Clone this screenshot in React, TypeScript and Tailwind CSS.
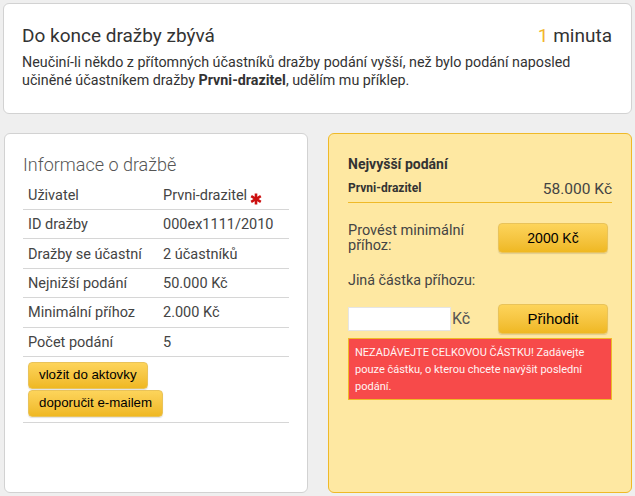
import React from "react";

const btn =
  "rounded-[4px] border border-[#e9c35a] bg-gradient-to-b from-[#fdd45a] to-[#efb821] text-black font-['Liberation_Sans',Arial,sans-serif] shadow-[0_1px_1px_rgba(0,0,0,0.12)]";

function Asterisk() {
  return (
    <svg width="12" height="12" viewBox="0 0 12 12" className="ml-[3px] translate-y-[3px]">
      <g stroke="#cc1111" strokeWidth="2.6" strokeLinecap="butt">
        <line x1="6" y1="0.5" x2="6" y2="11.5" />
        <line x1="1.2" y1="3.2" x2="10.8" y2="8.8" />
        <line x1="1.2" y1="8.8" x2="10.8" y2="3.2" />
      </g>
    </svg>
  );
}

export default function App() {
  const rows: [string, React.ReactNode][] = [
    ["Uživatel", <span className="flex items-center">Prvni-drazitel<Asterisk /></span>],
    ["ID dražby", "000ex1111/2010"],
    ["Dražby se účastní", "2 účastníků"],
    ["Nejnižší podání", "50.000 Kč"],
    ["Minimální příhoz", "2.000 Kč"],
    ["Počet podání", "5"],
  ];
  return (
    <div className="min-h-[496px] w-[635px] bg-[#efefef] pt-[3px] px-[3px] font-['Roboto',sans-serif]">
      <div className="h-[111px] rounded-[6px] border border-[#d2d2d2] bg-white pl-[18px] pr-[19px] pt-[20px]">
        <div className="flex justify-between text-[19px] leading-[24px] text-[#333]">
          <span>Do konce dražby zbývá</span>
          <span>
            <span className="text-[#f2b62c]">1</span> minuta
          </span>
        </div>
        <p className="mt-[5px] text-[14.3px] leading-[18px] text-[#333]">
          Neučiní-li někdo z přítomných účastníků dražby podání vyšší, než bylo podání naposled
          <br />
          učiněné účastníkem dražby <b>Prvni-drazitel</b>, udělím mu příklep.
        </p>
      </div>

      <div className="mt-[19px] flex gap-[20px] pl-[1px]">
        <div className="h-[360px] w-[304px] rounded-[6px] border border-[#d2d2d2] bg-white px-[18px] pt-[17px]">
          <h2 className="text-[18px] font-light leading-[28px] text-[#555]">Informace o dražbě</h2>
          <div className="mt-[1px] w-[266px]">
            {rows.map(([k, v], i) => (
              <div
                key={i}
                className={
                  "flex items-center border-b border-[#d6d6d6] pt-[2px] text-[14.5px] text-[#444] " +
                  (i === 0 ? "h-[30px]" : "h-[29.4px]")
                }
              >
                <span className="w-[140px] pl-[5px]">{k}</span>
                <span>{v}</span>
              </div>
            ))}
            <div className="flex flex-col items-start gap-[1px] border-b border-[#d6d6d6] pb-[5px] pl-[5px] pt-[5px]">
              <button className={btn + " h-[27px] px-[10px] text-[13.3px]"}>vložit do aktovky</button>
              <button className={btn + " h-[27px] px-[10px] text-[13.3px]"}>doporučit e-mailem</button>
            </div>
          </div>
        </div>

        <div className="h-[360px] w-[306px] rounded-[6px] border border-[#efb928] bg-[#fee8a2] px-[19px] pt-[20px] text-[#444]">
          <div className="text-[14px] font-bold leading-[20px] text-[#333]">Nejvyšší podání</div>
          <div className="mt-[4px] flex h-[25px] items-center justify-between border-b border-[#efb928] pb-[1px]">
            <span className="-translate-y-[2px] text-[12px] font-bold text-[#333]">Prvni-drazitel</span>
            <span className="text-[15.5px] text-[#444]">58.000 Kč</span>
          </div>
          <div className="mt-[20px] flex items-center">
            <span className="w-[150px] pr-[20px] text-[14.5px] leading-[15px]">Provést minimální příhoz:</span>
            <button className={btn + " h-[30px] w-[110px] text-[14px]"}>2000 Kč</button>
          </div>
          <div className="mt-[18px] text-[14.3px] leading-[18px]">Jiná částka příhozu:</div>
          <div className="mt-[15px] flex items-center">
            <div className="flex w-[150px] items-center">
              <input className="h-[24px] w-[103px] border border-[#e5e5e5] bg-white outline-none" />
              <span className="ml-[1px] text-[16px] text-[#555]">Kč</span>
            </div>
            <button className={btn + " h-[30px] w-[110px] text-[15px]"}>Přihodit</button>
          </div>
          <div className="mt-[4px] border border-[#efb928] bg-[#f74a4a] px-[6px] pb-[4px] pt-[5px] text-[11px] leading-[17px] text-[#fff4f4]">
            NEZADÁVEJTE CELKOVOU ČÁSTKU! Zadávejte pouze částku, o kterou chcete navýšit poslední podání.
          </div>
        </div>
      </div>
    </div>
  );
}
